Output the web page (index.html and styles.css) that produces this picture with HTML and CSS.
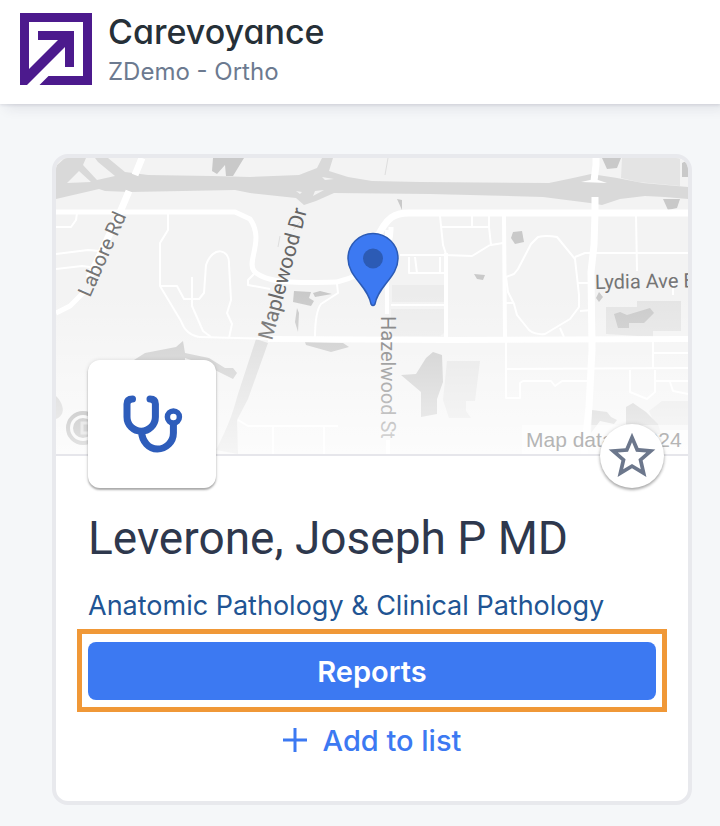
FILE: index.html
```html
<!DOCTYPE html>
<html lang="en">
<head>
<meta charset="utf-8">
<meta name="viewport" content="width=device-width, initial-scale=1">
<title>Carevoyance</title>
<link rel="stylesheet" href="styles.css">
</head>
<body>
<header class="topbar">
  <svg class="logo" viewBox="20 13 72 72" aria-hidden="true">
    <path fill="#4c1a8d" d="M20 13H92V85H20Z"/>
    <path fill="#fff" d="M29 22H83V76H48.500L39.500 85H27L65 47V67H74V31H38V40H58L29 69Z"/>
  </svg>
  <div class="brand">
    <div class="brand-name">Carevoyance</div>
    <div class="brand-account">ZDemo - Ortho</div>
  </div>
</header>
<main class="page">
  <article class="card">
    <div class="map">
      <svg class="map-art" viewBox="56 158 632 296" preserveAspectRatio="xMidYMid slice" role="img" aria-label="Map">
        <defs>
          <linearGradient id="fade" x1="0" y1="0" x2="0" y2="1">
            <stop offset="0.45" stop-color="#fff" stop-opacity="0"/>
            <stop offset="1" stop-color="#fff" stop-opacity="0.75"/>
          </linearGradient>
        </defs>
        <rect x="56" y="158" width="632" height="296" fill="#f3f3f3"/>
        <!-- blocks -->
        <g fill="#e4e4e4">
          <path d="M622 158H680V186L638 182L621 178Z"/>
          <path d="M606 307H637V301H681V331H653V337L606 334Z"/>
          <path d="M447 361H480L475 401H466V411L471 418H449L443 400Z"/>
          <path d="M392 285H445V302H392ZM391 309H444V333L440 336H391Z" fill="#ececec"/>
          <path d="M649 411L662 401H688V430H658Z"/>
        </g>
        <!-- highway -->
        <g fill="#d9d9d9">
          <path d="M56 158H86L83 165L97 180L115 176L98 162L95 158H108L125 172L148 175L212 176L250 177L299 175L317 168L322 158H333L329 171L348 177L372 181L420 182L549 183L573 178L591 174L617 178L643 183L688 187V199L665 197L645 196L620 199L602 205L590 203L543 197L430 194L334 193L316 201L304 205L296 198L250 193L235 190L130 192L105 191L99 189L56 199V166Z"/>
          <path d="M238 454L216 450C229 425 233 412 238 394L256 339L268 343L248 399L237 420Z"/>
        </g>
        <path fill="#f3f3f3" d="M79 171L91 182L67 183ZM56 158H65L56 166ZM322 177L334 179L325 180ZM313 196L315 191L324 190ZM296 191L302 192L300 194Z"/>
        <path fill="#fff" d="M581 182L590 180H598L607 183Z"/>
        <!-- buildings -->
        <g fill="#c9c9c9">
          <path d="M213 158H244L233 176H226L225 165L217 174L212 171Z"/>
          <path d="M602 158H621L617 168L607 169Z"/>
          <path d="M682 163L688 160V177H682Z"/>
          <path d="M663 199H680L677 208L668 210Z"/>
          <path d="M397 199L402 200V210Z"/>
          <path d="M513 232L522 231L524 242L515 244L511 238Z"/>
          <path d="M474 274L485 275L483 280L477 279Z"/>
          <path d="M294 291L311 292L309 298L314 301L311 306L293 302ZM313 293L320 291L332 294L315 297Z"/>
          <path d="M596 298L599 292L603 297L599 302Z"/>
          <path d="M297 308L299 313L298 332L295 322Z"/>
          <path d="M305 342L343 343L349 347L331 352L306 345Z"/>
          <path d="M401 375L416 374L426 358L433 352L442 355L443 382L437 399V414L421 417V392Z"/>
          <path d="M614 314L620 312L627 315L650 308L654 313L644 323L629 323V328L618 328Z"/>
          <path d="M134 360L145 353L176 347L183 341L185 353L209 358L225 368L233 368L237 373L233 379L215 370L200 363L185 358V365Z"/>
          <path d="M592 410L607 412L611 417L617 420L614 424L600 421L591 433Z"/>
          <path d="M626 407L633 403L646 412L658 424L661 434H626Z"/>
          <path d="M56 396C64 404 66 415 56 419Z"/>
        </g>
        <!-- streets -->
        <g fill="none" stroke="#fff" stroke-linejoin="round">
          <path stroke-width="5" d="M56 212H235L250 219C265 240 246 262 254 271C266 284 300 283 337 282C365 275 392 259 391 227"/>
          <path stroke-width="7" d="M376 240C387 216 395 213 409 213H595L688 213"/>
          <path stroke-width="7" d="M596 158V165L594 181M595 197V213L594 245L591 272L592 350L589 407L584 454"/>
          <path stroke-width="7" d="M142 158L135 175M129 191L121 210L89 278"/>
          <path stroke-width="5" d="M85 291L70 306L56 313"/>
          <path stroke-width="2" d="M199 337L270 339"/>
          <path stroke-width="6" d="M268 339L450 340L688 339"/>
          <path stroke-width="4" d="M387 230V314M388 440V454"/>
          <path stroke-width="4" d="M504 216L505 338M446 253V337"/>
          <path stroke-width="2" d="M77 213L76 220L71 227H56M56 254L88 250L100 251M56 269L82 266L90 267"/>
          <path stroke-width="2" d="M168 214V230L160 243V286L181 321Q186 335 199 337M160 286H177L184 299H199L204 293L206 265C213 245 230 249 229 264L231 300L227 313L232 324L229 338M192 277V306L203 331L211 337"/>
          <path stroke-width="2" d="M337 284L338 293L321 304Q315 312 315 338M254 274L248 280V285L270 289M238 420L248 426H338M273 427V454M324 427V454"/>
          <path stroke-width="2" d="M440 216L443 245L447 257M442 227H489L491 245L503 243M472 216V226M489 214V227M400 255H445L472 256L490 245M409 257V273H446M415 257L417 273M440 257V273M391 305H446"/>
          <path stroke-width="2" d="M514 274L506 277L508 292L514 304L517 315L529 330Q535 335 545 334L570 319L579 307V295L575 259L557 237Q546 235 538 237L531 244L518 269ZM575 257L585 253L688 253M578 283H592M505 303H514M560 328L564 337M580 311L592 310M636 214L637 271M673 278V295"/>
          <path stroke-width="2" d="M506 337V398H520V383L523 381H551L555 386L562 381H590M507 369L688 368M653 341V368M654 353H688M630 370V392L647 399L655 392V370M656 381H688M670 382L673 391L688 394"/>
          <path stroke-width="1" stroke="#ddd" d="M388 158L385 175M300 222L293 230M280 236L278 247"/>
        </g>
        <!-- street names -->
        <g class="street" fill="#757575">
          <text transform="translate(90 298) rotate(-66)">Labore Rd</text>
          <text class="street-major" fill="#666" transform="translate(272 341) rotate(-75)">Maplewood Dr</text>
          <text transform="translate(381 316) rotate(90)">Hazelwood St</text>
          <text transform="translate(595 289) rotate(-1)">Lydia Ave E</text>
        </g>
        <circle cx="83" cy="428" r="15" fill="#f3f3f3" stroke="#999" stroke-width="4"/>
        <circle cx="83" cy="428" r="10" fill="#999"/>
        <path d="M88 423H82V433H88" fill="none" stroke="#ccc" stroke-width="3"/>
        <rect x="56" y="158" width="632" height="296" fill="url(#fade)"/>
        <rect x="522" y="425" width="166" height="29" fill="#fff" opacity="0.5"/>
        <text class="credit" x="526" y="447" fill="#b5b5b5">Map data ©2024</text>
        <path fill="#3c79f2" stroke="#2c5bb5" stroke-width="1.500" d="M373 233.500A25 25 0 0 0 348 258.500C348 277 368 286 371 304Q373 307 375 304C378 286 398 277 398 258.500A25 25 0 0 0 373 233.500Z"/>
        <circle cx="373" cy="258.500" r="10" fill="#2c5bb5"/>
      </svg>
      <div class="specialty-badge">
        <svg class="stethoscope" viewBox="120 392 64 64" aria-hidden="true" fill="none" stroke="#2e5dbb" stroke-linecap="round">
          <path stroke-width="7" d="M132.500 399Q127 399 127 404V417A14.200 14.200 0 0 0 155.400 417V404Q155.400 399 150 399"/>
          <path stroke-width="7" stroke-linecap="butt" d="M141.500 431C142 442 149 449 157.400 449C166 449 173.400 442 173.400 433V424"/>
          <circle cx="173.400" cy="417" r="6" stroke-width="5.500"/>
        </svg>
      </div>
      <button class="favorite" type="button" aria-label="Favorite">
        <svg class="star" viewBox="0 0 24 24" aria-hidden="true"><path fill="#6c778c" d="M22 9.240l-7.190-.620L12 2 9.190 8.630 2 9.240l5.460 4.730L5.820 21 12 17.270 18.180 21l-1.630-7.030L22 9.240zM12 15.400l-3.760 2.270 1-4.280-3.320-2.880 4.380-.380L12 6.100l1.710 4.040 4.380.380-3.320 2.880 1 4.280L12 15.400z"/></svg>
      </button>
    </div>
    <div class="card-body">
      <h1 class="name">Leverone, Joseph P MD</h1>
      <p class="specialty">Anatomic Pathology &amp; Clinical Pathology</p>
      <div class="highlight"><button class="reports" type="button">Reports</button></div>
      <button class="add" type="button">
        <svg class="plus" viewBox="0 0 24 24" aria-hidden="true"><path d="M12 0V24M0 12H24" stroke="currentColor" stroke-width="3"/></svg>
        <span>Add to list</span>
      </button>
    </div>
  </article>
</main>
</body>
</html>
```
FILE: styles.css
```css
* {
  box-sizing: border-box;
}

body {
  margin: 0;
  background: #f5f7f9;
  color: #2e384d;
  font-family: Inter, "Liberation Sans", sans-serif;
}

button {
  border: 0;
  padding: 0;
  font: inherit;
  cursor: pointer;
}

.topbar {
  display: flex;
  gap: 16px;
  padding: 12px 20px;
  background: #fff;
  box-shadow: 0 1px 3px rgba(40, 40, 70, 0.12), 6px 4px 12px rgba(40, 40, 70, 0.1);
}

.logo {
  width: 72px;
  height: 72px;
  margin-top: 1px;
}

.brand-name {
  color: #263038;
  font-size: 34px;
  font-weight: 500;
  font-feature-settings: "cv11";
  line-height: 40px;
}

.brand-account {
  color: #6c7a90;
  font-size: 24px;
  line-height: 40px;
}

.page {
  padding: 50px 28px 20px 52px;
}

.card {
  border: 4px solid #e8e9ed;
  border-radius: 16px;
  background: #fff;
}

.map {
  position: relative;
  border-bottom: 2px solid #e6e6eb;
}

.map-art {
  display: block;
  width: 100%;
  height: 296px;
  border-radius: 12px 12px 0 0;
}

.street {
  font-family: Roboto, sans-serif;
  font-size: 20px;
}

.street-major {
  font-size: 21px;
}

.credit {
  font-family: "Liberation Sans", sans-serif;
  font-size: 21px;
}

.specialty-badge {
  position: absolute;
  bottom: -34px;
  left: 32px;
  display: grid;
  place-items: center;
  width: 128px;
  height: 128px;
  border-radius: 12px;
  background: #fff;
  box-shadow: 0 2px 2px rgba(0, 0, 0, 0.3), 0 0 4px rgba(0, 0, 0, 0.12);
}

.stethoscope {
  width: 64px;
  height: 64px;
}

.favorite {
  position: absolute;
  right: 24px;
  bottom: -34px;
  display: grid;
  place-items: center;
  width: 64px;
  height: 64px;
  border-radius: 50%;
  background: #fff;
  box-shadow: 0 2px 3px rgba(0, 0, 0, 0.3), 0 0 4px rgba(0, 0, 0, 0.12);
}

.star {
  width: 56px;
  height: 56px;
}

.card-body {
  padding: 50px 32px 33px;
}

.name {
  margin: 0;
  font-family: Roboto, sans-serif;
  font-size: 46px;
  font-weight: 400;
  line-height: 64px;
}

.specialty {
  margin: 16px 0 4px;
  color: #215493;
  font-size: 27px;
  line-height: 39px;
}

.highlight {
  margin: 0 -11px;
  border: 5px solid #f09837;
  padding: 8px 6px 7px;
}

.reports {
  display: block;
  width: 100%;
  height: 58px;
  border-radius: 8px;
  background: #3c79f2;
  color: #fff;
  font-size: 29px;
  font-weight: 600;
}

.add {
  display: flex;
  align-items: center;
  justify-content: center;
  gap: 16px;
  width: 100%;
  height: 56px;
  background: none;
  color: #3c79f2;
  font-size: 29px;
  font-weight: 500;
}

.plus {
  width: 24px;
  height: 24px;
}
```
